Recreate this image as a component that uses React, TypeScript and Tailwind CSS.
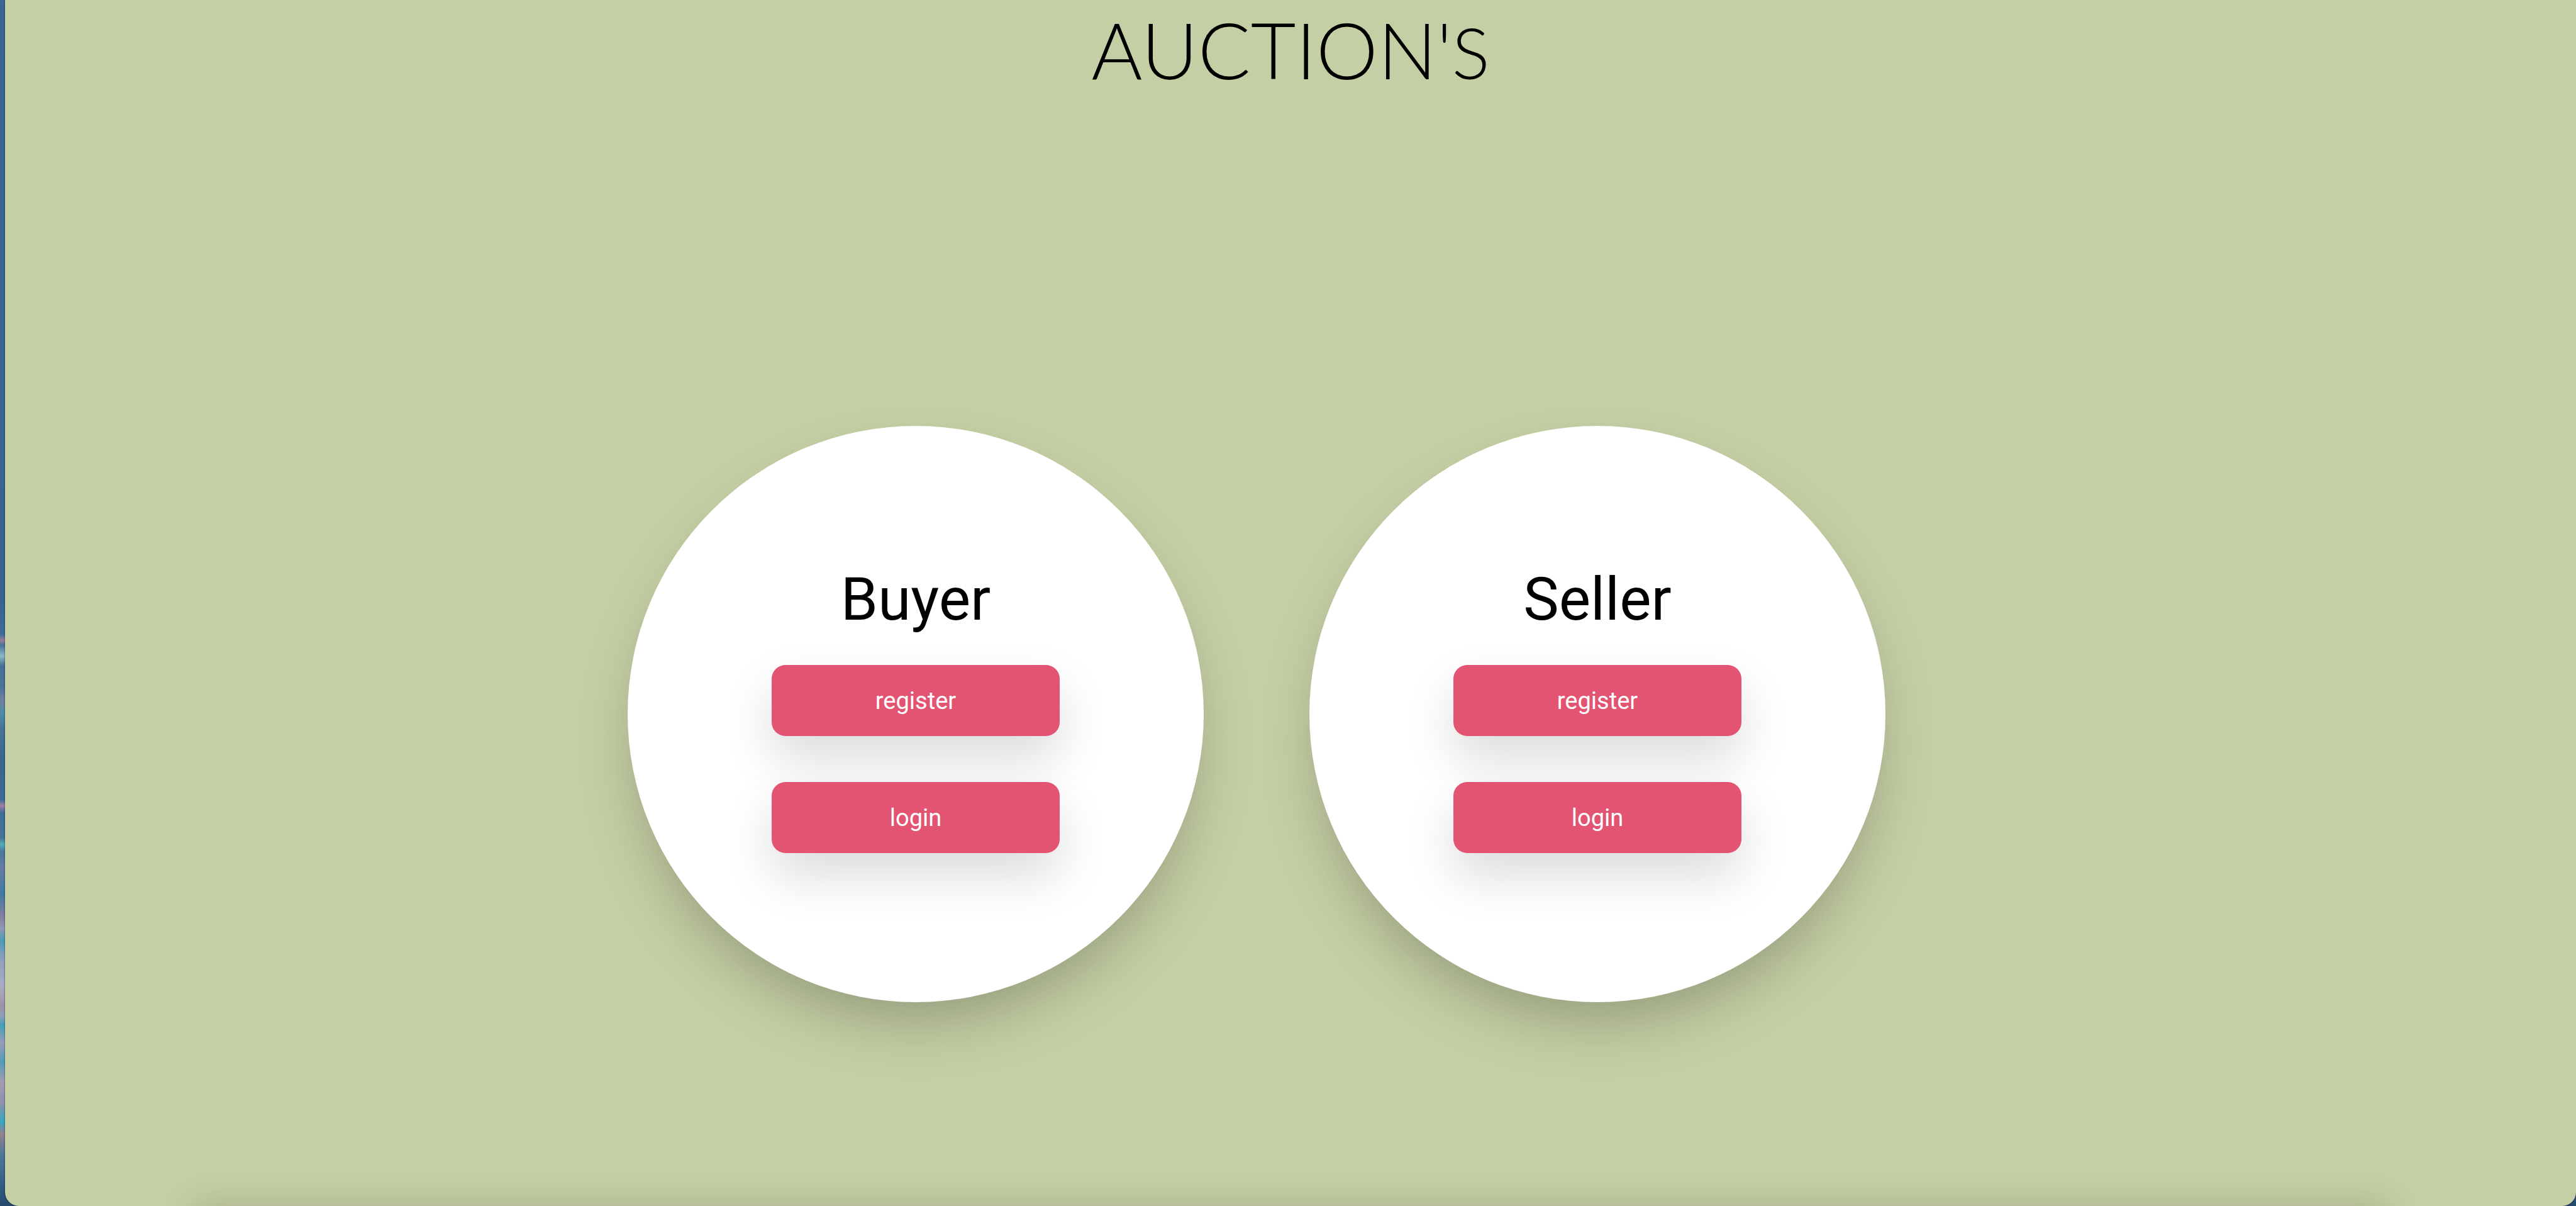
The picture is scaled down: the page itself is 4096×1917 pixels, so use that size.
import React from "react";

const roles = ["Buyer", "Seller"];
const actions = ["register", "login"];

function RoleCard({ role }: { role: string }) {
  return (
    <section
      aria-label={role}
      className="flex size-[916px] shrink-0 flex-col items-center rounded-full bg-white pt-[220px] shadow-[0_46px_92px_-18px_rgba(0,0,0,0.25)]"
    >
      <h2 className="font-['Roboto',sans-serif] text-[95px] leading-[112px] text-black">{role}</h2>
      <div className="mt-12 flex w-1/2 flex-col gap-[73px]">
        {actions.map((action) => (
          <button
            key={action}
            type="button"
            className="h-[113px] w-full cursor-pointer rounded-[22px] bg-[#e35372] font-['Roboto',sans-serif] text-[38px] leading-[48px] text-white shadow-[0_37px_78px_rgba(0,0,0,0.14)]"
          >
            {action}
          </button>
        ))}
      </div>
    </section>
  );
}

export default function App() {
  return (
    <div className="h-screen overflow-hidden bg-[linear-gradient(180deg,#3b6792_0%,#386693_25%,#38658f_50%,#3f6c96_52.6%,#9a7d9f_53.1%,#4a739a_53.5%,#8db8c4_54.4%,#45719a_55.2%,#4b739a_57%,#74809f_58%,#4b8da8_59.2%,#477299_60.5%,#37678f_63%,#3d6b95_66.3%,#a080a4_66.8%,#3c6d96_67.4%,#46759c_69.5%,#55b0b8_70%,#4a789d_70.6%,#687ba3_72%,#3e7ba3_74%,#857fa0_76%,#8f9bb8_77%,#4d9ab9_78%,#8e9fbd_79.5%,#a9adc4_81.7%,#a193a8_83.4%,#8f9fba_84.3%,#42a0bb_85%,#9b9cb8_86.5%,#4f9dba_88%,#a69bb2_89.7%,#8b92ae_91.5%,#37a6c4_93%,#94828e_94%,#4f7897_95.7%,#35608a_98%,#264a6e_100%)] pl-2">
      <main className="relative flex h-full flex-col overflow-hidden rounded-b-[22px] bg-[#c5cfa5] shadow-[0_0_3px_rgba(0,0,0,0.6)]">
        <h1 className="h-[152px] pt-2 text-center font-['Lato',sans-serif] text-[124px] leading-[140px] font-light text-black">
          AUCTION'<span className="text-[112px] leading-none uppercase">s</span>
        </h1>
        <div className="mt-[525px] flex justify-center gap-[168px] pr-[108px]">
          {roles.map((role) => (
            <RoleCard key={role} role={role} />
          ))}
        </div>
        <div className="absolute inset-x-[300px] top-full h-40 shadow-[0_0_56px_rgba(0,0,0,0.16)]" />
      </main>
    </div>
  );
}
